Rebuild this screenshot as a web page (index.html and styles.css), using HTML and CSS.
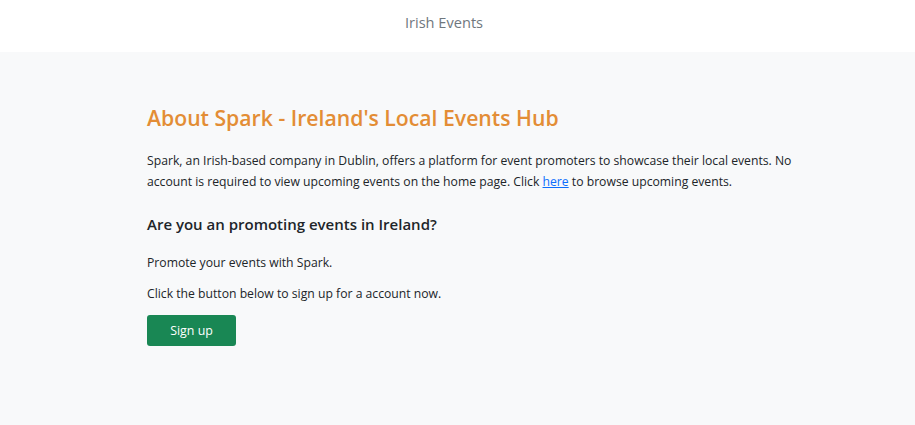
FILE: index.html
```html
<!DOCTYPE html>
<html lang="en">
<head>
<meta charset="utf-8">
<title>Irish Events</title>
<link rel="stylesheet" href="styles.css">
</head>
<body>
<header class="topbar">
  <span class="brand">Irish Events</span>
</header>
<main class="page">
  <section class="content">
    <h1 class="title">About Spark - Ireland's Local Events Hub</h1>
    <p class="lead">Spark, an Irish-based company in Dublin, offers a platform for event promoters to showcase their local events. No account is required to view upcoming events on the home page. Click <a href="#" class="link">here</a> to browse upcoming events.</p>
    <h2 class="subtitle">Are you an promoting events in Ireland?</h2>
    <p class="text">Promote your events with Spark.</p>
    <p class="text last">Click the button below to sign up for a account now.</p>
    <button class="btn">Sign up</button>
  </section>
</main>
</body>
</html>
```
FILE: styles.css
```css
* { box-sizing: border-box; }
html, body { height: 100%; }
body {
  margin: 0;
  font-family: "Open Sans", "Noto Sans", sans-serif;
  color: #212529;
  background: #f8f9fa;
  display: flex;
  flex-direction: column;
}
.topbar {
  background: #fff;
  height: 52px;
  display: flex;
  justify-content: center;
  padding: 11px 27px 0 0;
}
.brand {
  font-size: 14.6px;
  color: #6f777e;
  line-height: 22px;
}
.page {
  flex: 1;
  padding: 50px 0 0 147px;
}
.content { max-width: 660px; }
.title {
  margin: 0 0 16px;
  font-size: 21.2px;
  font-weight: 600;
  color: #e38d35;
  line-height: 32px;
}
.lead {
  margin: 0 0 20px;
  font-size: 12.2px;
  line-height: 21px;
}
.link { color: #0d6efd; }
.subtitle {
  margin: 0 0 17px;
  font-size: 15px;
  font-weight: 600;
  line-height: 24px;
}
.text {
  margin: 0 0 12px;
  font-size: 12.2px;
  line-height: 19px;
}
.btn {
  font-family: inherit;
  background: #198754;
  color: #fff;
  border: 0;
  border-radius: 3px;
  width: 89px;
  height: 31px;
  font-size: 12.4px;
  padding: 0;
  display: block;
}
```
